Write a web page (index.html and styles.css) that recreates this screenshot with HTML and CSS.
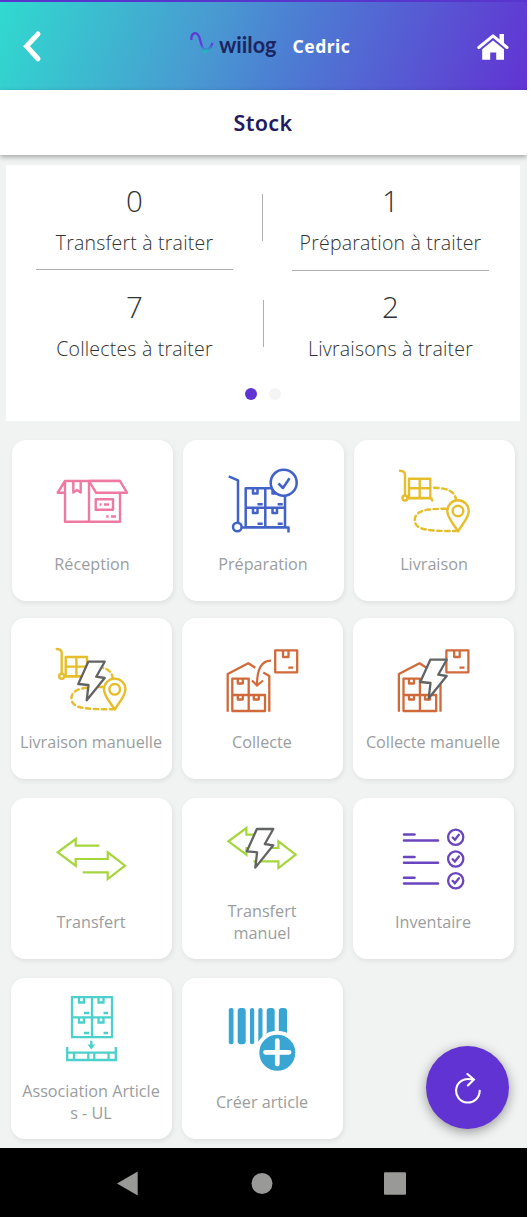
FILE: index.html
```html
<!DOCTYPE html>
<html lang="fr">
<head>
<meta charset="utf-8">
<title>Stock</title>
<link rel="stylesheet" href="styles.css">
</head>
<body>
<svg class="defs" width="0" height="0">
  <defs>
    <g id="delivery" fill="none" stroke="#e6bd2a" stroke-width="2.4" stroke-linejoin="round" stroke-linecap="round">
      <path d="M400 470.7q5 .3 5 4V495M408 498.3h23.500l.7 2.200M409 478.700h21.300v19.300H409zM419.700 478.700v19M409 488.300h21.300"/>
      <circle cx="405" cy="498" r="2.500"/>
      <path stroke-dasharray="4.500 3.500" d="M434 487.700c12 .3 21 3 22 12M446 508.700c-20 0-31 2-31.300 11.300 0 10 13 11 41 11"/>
      <path d="M458 531.500c-3-6-10.700-13-10.700-20.500a10.700 10.700 0 0 1 21.400 0c0 7.500-7.700 14.500-10.700 20.500z" fill="#fff"/>
      <circle cx="458" cy="511" r="5.300"/>
    </g>
    <g id="depot" fill="none" stroke="#d06a3a" stroke-width="2.300" stroke-linejoin="round">
      <path d="M232.300 678.700h16.400v32.300h-16.400zM232.300 695h32.700v16h-32.700M237.800 679v4.500h5V679M237.800 695v4.500h5V695M253.800 695v4.500h5V695M275.200 650.400h22v21.900h-22zM283 650.500v6.500h5.500v-6.500M288.300 667.700h5"/>
      <path d="M227.700 711.700V674l20.600-10.700 7 4.500M263.300 672.500l6 3.500v35.700"/>
    </g>
    <path id="bolt" d="M88.300 661.700h16.400l-8.500 15 8.500 1.300-18 22.300 1.800-15.300-10.200-1z" fill="#fff" stroke="#626464" stroke-width="2.300" stroke-linejoin="round"/>
    <path id="swap" d="M99.300 845.700H75.700V839l-18 13.300 18 13.400V859h32v-6.700l17.300 13.400-17.300 13.300v-6.700h-25" fill="none" stroke="#a5d63c" stroke-width="2.200"/>
  </defs>
</svg>
<div class="app">
  <header class="topbar">
    <svg class="back" width="24" height="36" viewBox="21 29 24 36"><path d="M38 34 26.500 46.200 38 58.800" fill="none" stroke="#fff" stroke-width="5" stroke-linecap="round"/></svg>
    <div class="brand">
      <svg width="90" height="34" viewBox="190 25 90 34">
        <defs><linearGradient id="wave" x1="0" y1="0" x2="0" y2="1"><stop offset="0" stop-color="#5b3bd0"/><stop offset=".6" stop-color="#6a35e6"/><stop offset="1" stop-color="#16c4b4"/></linearGradient></defs>
        <path d="M191.500 38c-1-7 5-9.500 7.500-3.500s2 12.500 6.500 13c3.500 0 6-3 7-6.500-1.500 6-5.500 9.500-10 8.500" fill="none" stroke="url(#wave)" stroke-width="2.200"/>
        <text class="logo" x="219" y="50.500" textLength="57.500" lengthAdjust="spacingAndGlyphs">wiilog</text>
      </svg>
      <span class="user">Cedric</span>
    </div>
    <svg class="home" width="32" height="28" viewBox="477 32 32 28"><path d="m478.800 46.500 14.200-11.700 14 11.700" fill="none" stroke="#fff" stroke-width="3" stroke-linecap="round" stroke-linejoin="round"/><path fill="#fff" d="M499.500 33h4.500v10l-4.500-4zM482.200 48.300 493 39.500l11 8.800v10.400h-7.800v-7.200h-6v7.200h-8z"/></svg>
  </header>
  <h1 class="title">Stock</h1>
  <main>
    <section class="stats">
      <div class="stat-grid">
        <div class="stat"><b>0</b><span>Transfert à traiter</span></div>
        <i class="sep"></i>
        <div class="stat stat-right"><b>1</b><span>Préparation à traiter</span></div>
        <div class="stat"><b>7</b><span>Collectes à traiter</span></div>
        <i class="sep sep-low"></i>
        <div class="stat"><b>2</b><span>Livraisons à traiter</span></div>
      </div>
      <div class="dots"><i class="on"></i><i></i></div>
    </section>
    <section class="tiles first">
      <a class="tile"><svg viewBox="52 456 80 86"><g fill="none" stroke="#ee7aa2" stroke-width="2.400" stroke-linejoin="round"><path d="M65 481h55v40.700H65zM89 481v40.700M65 481l-7.300 11.700H65M73.300 481v11.500l3.700-2.500 3.700 2.500V481M95.700 499.300H113v10.500H95.700z"/><path d="M89 481h31l7 11.700H96z" fill="#fff"/><path d="M99.500 504.500h2M104 504.500h5M106.300 516.500h2.400M111 516.500h5"/></g></svg><span>Réception</span></a>
      <a class="tile"><svg viewBox="223 456 80 86"><g fill="none" stroke="#4262c8" stroke-width="2.500" stroke-linejoin="round"><path d="m228.700 476.300 9.300 4V523M242 527.500h46.500v5M245.700 488.300H285v39h-39.300zM265.300 488.300v39M245.700 507.700H285"/><path d="M253 488.500v5h4.500v-5M253 508v5h4.500v-5M272.500 488.500v5h4.500v-5M272.500 508v5h4.500v-5M257.500 504.300h5.200M257.500 523.700h5.200M277.700 504.300h5M277.700 523.700h5"/><circle cx="237.300" cy="527" r="4.300" fill="#fff"/><circle cx="283.700" cy="482.700" r="13" fill="#fff"/><path d="m278.500 483.500 4.500 4.500 6.500-9.700"/></g></svg><span>Préparation</span></a>
      <a class="tile"><svg viewBox="394 456 80 86"><use href="#delivery"/></svg><span>Livraison</span></a>
    </section>
    <section class="tiles">
      <a class="tile"><svg viewBox="51 634 80 86"><use href="#delivery" transform="translate(-343.300 178.300)"/><use href="#bolt"/></svg><span>Livraison manuelle</span></a>
      <a class="tile"><svg viewBox="222 634 80 86"><use href="#depot"/><path d="M271 660.700c-10 0-14 9-14 24.500M252 680.500l5 5 6-5" fill="none" stroke="#d06a3a" stroke-width="2.200"/></svg><span>Collecte</span></a>
      <a class="tile"><svg viewBox="393 634 80 86"><use href="#depot" transform="translate(171.200 0)"/><use href="#bolt" transform="translate(342 -2)"/></svg><span>Collecte manuelle</span></a>
      <a class="tile"><svg viewBox="51 814 80 86"><use href="#swap"/></svg><span>Transfert</span></a>
      <a class="tile"><svg viewBox="222 814 80 86"><use href="#swap" transform="translate(170.700 -11)"/><use href="#bolt" transform="translate(168.600 167.300)"/></svg><span>Transfert<br>manuel</span></a>
      <a class="tile"><svg viewBox="393 814 80 86"><g fill="none" stroke="#6a45bf" stroke-width="2.600" stroke-linecap="round"><path d="M404 834.500h10.500M404 840.500h34M404 857h10.500M404 862.700h34M404 877.700h10.500M404 883.500h34"/><g stroke-width="2.300"><circle cx="455.700" cy="837.300" r="7.600"/><circle cx="455.700" cy="859" r="7.600"/><circle cx="455.700" cy="880.700" r="7.600"/><path d="m452.700 837.500 2.200 2.300 4-5M452.700 859.200l2.200 2.300 4-5M452.700 880.900l2.200 2.300 4-5"/></g></g></svg><span>Inventaire</span></a>
      <a class="tile"><svg viewBox="51 994 80 86"><g fill="none" stroke="#4cd0cc" stroke-width="2.300"><path d="M72 997.200h40v40H72zM92 997.200v40M72 1017.300h40M79 997.500v5h5v-5M79 1017.500v5h5v-5M98.500 997.500v5h5v-5M98.500 1017.500v5h5v-5M84 1013h5M84 1033h5M103.500 1013h4.500M103.500 1033h4.500"/><path d="M67.200 1047v13h48.600v-13M67.200 1052.700h48.600M74 1053v6.500M88.300 1053v6.500M94.300 1053v6.500M108.500 1053v6.500M91.300 1040.700v6"/></g><path fill="#4cd0cc" d="M87.500 1044.500h7.600l-3.800 5z"/></svg><span>Association Article<br>s - UL</span></a>
      <a class="tile"><svg viewBox="222 994 80 86"><g fill="#38a5d3"><rect x="228.800" y="1008" width="4.700" height="36.300" rx="2"/><rect x="237.700" y="1008" width="8" height="36.300" rx="3"/><rect x="250" y="1008" width="4.200" height="36.300" rx="2"/><rect x="258.300" y="1008" width="4.200" height="36.300" rx="2"/><rect x="266.700" y="1008" width="8" height="36.300" rx="3"/><rect x="278.800" y="1008" width="8.200" height="36.300" rx="3"/><circle cx="277.300" cy="1052.700" r="20" stroke="#fff" stroke-width="4"/></g><path d="M265.500 1052.300h23.600M277.300 1040.500v23.600" stroke="#fff" stroke-width="4.700" stroke-linecap="round"/></svg><span>Créer article</span></a>
    </section>
    <button class="fab" aria-label="Actualiser"><svg width="32" height="32" viewBox="451.300 1071.300 32 32"><path d="M479 1090A11.800 11.800 0 1 1 470 1078.600h3M466.700 1073.300l6.500 5.500-6 6" fill="none" stroke="#fff" stroke-width="2.100" stroke-linecap="round"/></svg></button>
  </main>
  <nav class="sysnav"><svg width="527" height="69" viewBox="0 1148 527 69" fill="#999a98"><path d="M137.700 1171.500v24l-20.700-12z"/><circle cx="262" cy="1183.500" r="10.500"/><rect x="384" y="1172.300" width="22" height="22.400" rx="1"/></svg></nav>
</div>
</body>
</html>
```
FILE: styles.css
```css
* { box-sizing: border-box; }
body { margin: 0; background: #fff; font-family: "Open Sans", "Noto Sans", sans-serif; }
svg { display: block; }
.defs { position: absolute; }
.app { width: 527px; height: 1217px; display: flex; flex-direction: column; background: #f1f2f2; overflow: hidden; }
.topbar { height: 90px; flex: none; display: flex; align-items: center; justify-content: space-between; padding: 2px 18px 0 21px; border-top: 2px solid #5835cc; background: linear-gradient(110deg, #30dacf 0%, #489cd1 38%, #4c7fd3 54%, #6233d3 100%); }
.brand { display: flex; align-items: center; gap: 13px; margin-left: 21px; width: 164px; }
.brand svg { margin-top: -6px; flex: none; }
.logo { font: 700 22px Lato, sans-serif; fill: #1c2560; }
.user { color: #fff; font: 700 17.500px "Noto Sans", sans-serif; letter-spacing: .5px; margin-top: -3px; }
.title { margin: 0; height: 65px; flex: none; background: #fefffe; color: #221b62; font: 600 21.500px/65px "Noto Sans", sans-serif; text-align: center; padding-right: 1px; letter-spacing: .3px; box-shadow: 0 2px 5px rgba(0,0,0,.32); position: relative; }
main { flex: 1; position: relative; }
.stats { height: 256px; width: 514px; margin: 10px 0 0 6px; padding-top: 18px; background: #fefffe; }
.stat-grid { display: grid; grid-template-columns: 197px 59px 197px; padding-left: 30px; }
.stat { display: flex; flex-direction: column; align-items: center; height: 99px; color: #303232; font-weight: 300; }
.stat:nth-child(1) { height: 87px; border-bottom: 1.500px solid #aeb0ae; }
.stat-right { height: 88px; border-bottom: 1.500px solid #aeb0ae; margin-bottom: 18px; }
.stat b { font-size: 29.500px; line-height: 36px; font-weight: 300; }
.stat span { font-size: 19.500px; line-height: 26px; margin-top: 11px; white-space: nowrap; letter-spacing: .2px; }
.sep { width: 1px; height: 47px; background: #aeb0ae; margin: 11px 0 0 29px; }
.sep-low { margin-left: 30px; }
.dots { display: flex; gap: 12px; padding-left: 239px; }
.dots i { width: 12px; height: 12px; border-radius: 50%; background: #f3f4f3; }
.dots .on { background: #6233d3; }
.tiles { display: grid; grid-template-columns: repeat(3, 161px); column-gap: 10px; row-gap: 19px; padding: 17px 0 0 11px; }
.tiles.first { padding: 19px 0 0 12px; }
.tile { height: 161px; padding: 16px 1px 0 0; border-radius: 14px; background: #fefffe; box-shadow: 1px 2px 5px rgba(0,0,0,.08); display: flex; flex-direction: column; align-items: center; color: #9b9d9f; }
.tile svg { width: 80px; height: 86px; flex: none; }
.tile span { height: 44px; display: flex; align-items: center; text-align: center; font-size: 16.200px; line-height: 22px; white-space: nowrap; }
.fab { position: absolute; right: 18px; bottom: 19px; width: 83px; height: 83px; padding: 0; border: 0; border-radius: 50%; background: #6233d3; box-shadow: 0 3px 12px rgba(0,0,0,.38); display: grid; place-items: center; }
.sysnav { height: 69px; flex: none; background: #000; }
```
